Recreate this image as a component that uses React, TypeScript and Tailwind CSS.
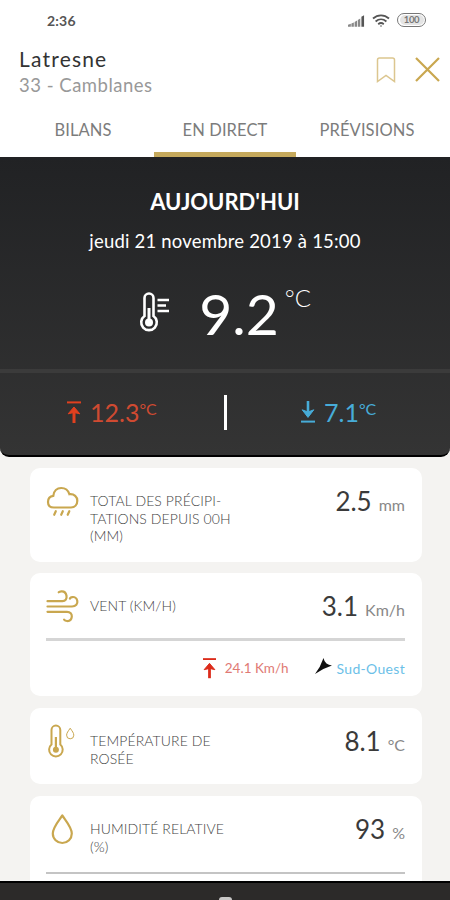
import { ReactNode } from 'react'
import clsx from 'clsx'

const GOLD = '#c9a74f'

interface MaxArrowProps {
  className?: string
  down?: boolean
}

const MaxArrow = ({ className, down = false }: MaxArrowProps) => (
  <svg viewBox="0 0 14 22" className={className} fill="none" stroke="currentColor">
    {down ? (
      <>
        <path d="M7 0v13" strokeWidth="2.6" />
        <path d="M1.2 8.8 7 16.4l5.8-7.6L7 11z" fill="currentColor" strokeWidth="1" />
        <path d="M0 20.6h14" strokeWidth="2" />
      </>
    ) : (
      <>
        <path d="M0 1.4h14" strokeWidth="2" />
        <path d="M7 22V9" strokeWidth="3" />
        <path d="M1.2 12.8 7 6l5.8 6.8L7 11.5z" fill="currentColor" strokeWidth="1" />
      </>
    )}
  </svg>
)

const RainIcon = () => (
  <svg width="34" height="32" viewBox="0 0 34 32" fill="none" stroke={GOLD} strokeWidth="2.2" strokeLinecap="round">
    <path d="M8 21.5C4 21.5 2 19 2 15.9c0-3.2 2.2-5.5 5.3-6C7.8 4.9 11 2 15.2 2c4 0 7 2.300 8.200 6.200 4.900-.5 7.900 2.600 7.900 6.500 0 3.900-2.500 6.800-6.300 6.800z" />
    <path d="M9.8 25.2l-1.600 3.600M16.800 25.200l-1.600 3.600M23.300 25.200l-1.600 3.600" />
  </svg>
)

const WindIcon = () => (
  <svg width="34" height="34" viewBox="0 0 34 34" fill="none" stroke={GOLD} strokeWidth="2.2" strokeLinecap="round">
    <path d="M1.500 12.200h15c3 0 4.500-2.300 4-5.400-.5-3-2.700-4.700-5.200-4.500-1.200.1-2 .4-2.600 1" />
    <path d="M1.500 17.500h24.500c4 0 5.800-2.700 5.300-5.600-.5-2.700-2.700-4.200-5.100-3.800-1.200.2-1.800.7-2.300 1.400" />
    <path d="M1.500 22.800h19.500c3.400 0 5 2.200 4.800 4.800-.3 3-2.300 4.600-4.800 4.400-1.500-.1-2.300-.6-2.900-1.400" />
  </svg>
)

const DewIcon = () => (
  <svg width="34" height="36" viewBox="0 0 34 36" fill="none" stroke={GOLD} strokeWidth="2">
    <path d="M5.500 21.500V7a4.400 4.400 0 0 1 8.800 0v14.500a6.800 6.800 0 1 1-8.800 0z" />
    <path d="M9.900 14v12" strokeWidth="2.2" />
    <circle cx="9.9" cy="26.7" r="3" fill={GOLD} stroke="none" />
    <path d="M24.200 5.200c2 3 3.600 4.800 3.600 7a3.600 3.600 0 0 1-7.200 0c0-2.200 1.600-4 3.600-7z" strokeWidth="1" />
  </svg>
)

const DropIcon = () => (
  <svg width="34" height="34" viewBox="0 0 34 34" fill="none" stroke={GOLD} strokeWidth="2.2" strokeLinejoin="round">
    <path d="M16.300 3.500c4.500 6.500 9.500 12 9.500 18a9.500 9.500 0 0 1-19 0c0-6 5-11.500 9.500-18z" />
  </svg>
)

const StatusBar = () => (
  <div className="flex h-10 shrink-0 items-center justify-between pr-6 pl-[47px]">
    <span className="text-[14px] font-bold tracking-[0.2px] text-[#555]">2:36</span>
    <div className="flex items-center gap-[7px]">
      <svg width="17" height="13" viewBox="0 0 18 13" fill="#888">
        <path d="M0 13v-2l3-1v3zM3.600 13V9.800l2.600-1.200V13zM7 13V8l2.600-1.400V13zM10.400 13V6l2.600-1.600V13z" />
        <path d="M14.200 13V2.500L17 1v12z" fill="#555" />
      </svg>
      <svg width="18" height="13" viewBox="0 0 18 13" fill="none" stroke="#555" strokeWidth="1.8">
        <path d="M1 4.500c4.800-4.200 11.200-4.200 16 0M3.600 7.500c3.200-2.800 7.600-2.800 10.800 0M6.200 10.200c1.700-1.400 3.900-1.400 5.600 0" />
        <circle cx="9" cy="12" r=".8" fill="#555" stroke="none" />
      </svg>
      <span className="flex h-[14px] w-[29px] items-center justify-center rounded-full border border-[#777] text-[9.5px] font-bold tracking-[-0.4px] text-[#777]">
        <span className="flex h-[10px] w-[24px] items-center justify-center rounded-full bg-[#e4e4e4]">100</span>
      </span>
    </div>
  </div>
)

const Header = () => (
  <div className="flex h-[63px] shrink-0 justify-between pr-[10px] pl-[19px]">
    <div className="pt-[5px]">
      <h1 className="text-[21px] leading-[27px] tracking-[1.2px] text-[#333]">Latresne</h1>
      <p className="text-[18.5px] leading-[27px] tracking-[0.5px] text-[#999]">33 - Camblanes</p>
    </div>
    <div className="flex items-center gap-[19px] pb-[4px]">
      <svg width="20" height="26" viewBox="0 0 20 26" fill="none" stroke="#dcc68f" strokeWidth="1.5">
        <path d="M1.500 24.500V3q0-2 2-2h13q2 0 2 2v21.500L10 18.500z" />
      </svg>
      <svg width="25" height="25" viewBox="0 0 25 25" fill="none" stroke={GOLD} strokeWidth="2.2">
        <path d="M1 1l23 23M24 1L1 24" />
      </svg>
    </div>
  </div>
)

const tabs = [
  { label: 'BILANS' },
  { label: 'EN DIRECT', active: true },
  { label: 'PRÉVISIONS' },
]

const Tabs = () => (
  <nav className="flex h-[54px] shrink-0 px-3">
    {tabs.map((tab) => (
      <button
        key={tab.label}
        className={clsx(
          'flex flex-1 justify-center border-b-[5px] pt-[15px] text-[16.5px] leading-[25px] tracking-[0.1px] text-[#7c7c7c]',
          tab.active ? 'border-[#c5a95c]' : 'border-transparent'
        )}
      >
        {tab.label}
      </button>
    ))}
  </nav>
)

const Today = () => (
  <section className="flex h-[300px] shrink-0 flex-col rounded-b-[9px] border-b-2 border-black bg-linear-to-b from-[#212224] to-[#343434] text-white">
    <div className="flex h-[212px] flex-col items-center">
      <h2 className="mt-[30px] text-[22px] leading-[30px] font-bold">AUJOURD'HUI</h2>
      <p className="mt-[10px] text-[18.5px] leading-[28px] tracking-[0.2px]">jeudi 21 novembre 2019 à 15:00</p>
      <div className="mt-[24px] flex h-[70px] items-start">
        <svg width="30" height="42" viewBox="0 0 30 42" className="mt-[12px] mr-[30px]" fill="none" stroke="#fff" strokeWidth="2.6">
          <path d="M5.500 25V7a4.500 4.500 0 0 1 9 0v18a7.800 7.800 0 1 1-9 0z" />
          <path d="M10 17v12" strokeWidth="3" />
          <circle cx="10" cy="31.5" r="4" fill="#fff" stroke="none" />
          <path d="M18.500 9H30M18.500 14.500H27M18.500 20H30" />
        </svg>
        <span className="text-[57px] leading-[68px]">9.2</span>
        <span className="ml-[6px] text-[24px] leading-[37px] font-light">°C</span>
      </div>
    </div>
    <div className="flex flex-1 items-center border-t-[4px] border-[#3b3b3b] pb-1">
      <div className="flex w-[224px] items-center pl-[67px] text-[#cf4a31]">
        <MaxArrow className="mr-[9px] h-[22px] w-[14px] text-[#e0401f]" />
        <span className="text-[25px] leading-[30px]">12.3</span>
        <span className="pb-[7px] text-[16px]">°C</span>
      </div>
      <div className="h-[35px] w-[3px] bg-white" />
      <div className="flex items-center pl-[74px] text-[#47acd8]">
        <MaxArrow down className="mr-[9px] h-[22px] w-[14px]" />
        <span className="text-[25px] leading-[30px]">7.1</span>
        <span className="pb-[7px] text-[16px]">°C</span>
      </div>
    </div>
  </section>
)

interface CardProps {
  icon: ReactNode
  lines: string[]
  value: string
  unit: string
  className?: string
  children?: ReactNode
}

const Card = ({ icon, lines, value, unit, className, children }: CardProps) => (
  <article className={clsx('shrink-0 rounded-[10px] bg-white pr-[17px] pl-4', className)}>
    <div className="flex">
      <div className="w-[44px] shrink-0">{icon}</div>
      <div className="flex-1 pt-[24px] text-[14px] leading-[17.5px] font-light tracking-[0.1px] text-[#444]">
        {lines.map((line) => (
          <div key={line}>{line}</div>
        ))}
      </div>
      <div className="flex items-baseline gap-[7px] pt-[18px]">
        <span className="text-[26px] leading-[31px] text-[#3a3a3a]">{value}</span>
        <span className="text-[16px] text-[#888]">{unit}</span>
      </div>
    </div>
    {children}
  </article>
)

export default function App() {
  return (
    <div className="flex h-[900px] w-[450px] flex-col overflow-hidden bg-white font-['Lato',sans-serif]">
      <StatusBar />
      <Header />
      <Tabs />
      <main className="flex h-[724px] shrink-0 flex-col overflow-hidden bg-[#f4f3f1]">
        <Today />
        <div className="flex shrink-0 flex-col pt-[11px] pr-[28px] pl-[30px]">
          <Card
            className="h-[94px]"
            icon={<div className="pt-[18px]"><RainIcon /></div>}
            lines={['TOTAL DES PRÉCIPI-', 'TATIONS DEPUIS 00H', '(MM)']}
            value="2.5"
            unit="mm"
          />
          <Card
            className="mt-[11px] h-[123px]"
            icon={<div className="pt-[16px]"><WindIcon /></div>}
            lines={['VENT (KM/H)']}
            value="3.1"
            unit="Km/h"
          >
            <div className="mt-[15px] h-[3px] bg-[#d5d5d5]" />
            <div className="flex h-[54px] items-center justify-end">
              <MaxArrow className="mr-[9px] h-[22px] w-[13px] text-[#dc2b1a]" />
              <span className="text-[13.5px] text-[#e07a74]">24.1 Km/h</span>
              <svg width="17" height="17" viewBox="0 0 17 17" className="mr-[5px] mb-1 ml-[26px]" fill="#111">
                <path d="M0 16Q5.500 9 8.500 0q.8 4 3 5.500T17 7.500Q7.500 10.500 0 16z" />
              </svg>
              <span className="text-[14px] tracking-[0.3px] text-[#6cbfe8]">Sud-Ouest</span>
            </div>
          </Card>
          <Card
            className="mt-[12px] h-[76px]"
            icon={<div className="pt-[15px]"><DewIcon /></div>}
            lines={['TEMPÉRATURE DE', 'ROSÉE']}
            value="8.1"
            unit="°C"
          />
          <Card
            className="mt-[12px] h-[120px]"
            icon={<div className="pt-[16px]"><DropIcon /></div>}
            lines={['HUMIDITÉ RELATIVE', '(%)']}
            value="93"
            unit="%"
          >
            <div className="mt-[17px] h-[2px] bg-[#c4c4c4]" />
          </Card>
        </div>
      </main>
      <footer className="flex flex-1 items-end justify-center overflow-hidden border-t-2 border-black bg-[#2c2a29]">
        <div className="h-[3px] w-[13px] rounded-t-full bg-[#c9c7c6]" />
      </footer>
    </div>
  )
}
